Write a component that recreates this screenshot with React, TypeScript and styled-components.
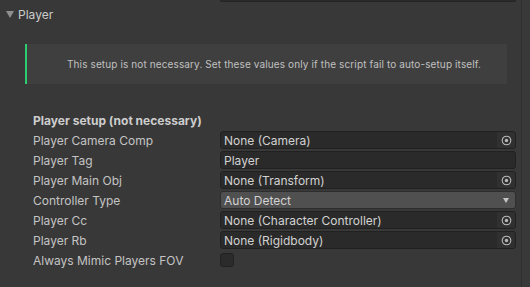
import React from "react";
import styled, { createGlobalStyle } from "styled-components";

const Global = createGlobalStyle`
  html, body { margin: 0; padding: 0; background: #383838; }
  body { font-family: Inter, "Noto Sans", sans-serif; }
`;

const Page = styled.div`
  width: 530px;
  height: 287px;
  display: flex;
  overflow: hidden;
  background: #383838;
`;

const Main = styled.div`
  width: 521px;
  display: flex;
  flex-direction: column;
`;

const Divider = styled.div`
  width: 1px;
  background: #2f2f2f;
`;

const Gutter = styled.div`
  flex: 1;
  background: #393939;
`;

const TopStub = styled.div`
  margin-left: 220px;
  width: 296px;
  height: 2px;
  background: #2a2a2a;
  border-bottom: 1px solid #232323;
  border-radius: 0 0 3px 3px;
  box-sizing: border-box;
`;

const Foldout = styled.div`
  display: flex;
  align-items: center;
  height: 16px;
  margin-top: 4px;
  padding-left: 6px;
  gap: 4px;
  color: #cbcbcb;
  font-size: 12px;
`;

const Triangle = styled.span`
  width: 0;
  height: 0;
  border-left: 4px solid transparent;
  border-right: 4px solid transparent;
  border-top: 7px solid #8f8f8f;
  margin-top: 1px;
`;

const HelpBox = styled.div`
  margin: 22px 14px 0 25px;
  height: 40px;
  background: #3f3f3f;
  border-left: 2px solid #2ecc71;
  display: flex;
  align-items: center;
  padding-left: 40px;
  color: #c0c0c0;
  font-size: 10px;
  letter-spacing: 0.12px;
`;

const Section = styled.div`
  margin-top: 27px;
  padding-left: 33px;
  display: flex;
  flex-direction: column;
  gap: 2px;
`;

const Heading = styled.div`
  height: 18px;
  display: flex;
  align-items: center;
  font-weight: 700;
  font-size: 12px;
  color: #cdcdcd;
`;

const Row = styled.div`
  display: grid;
  grid-template-columns: 187px 296px;
  height: 18px;
  align-items: center;
`;

const Label = styled.div`
  font-size: 12px;
  color: #c4c4c4;
  white-space: nowrap;
`;

const Field = styled.div<{ $dropdown?: boolean }>`
  height: 18px;
  box-sizing: border-box;
  border: 1px solid ${(p) => (p.$dropdown ? "#2e2e2e" : "#212121")};
  border-radius: 3px;
  background: ${(p) => (p.$dropdown ? "#505050" : "#2a2a2a")};
  display: flex;
  align-items: center;
  padding-left: 3px;
  font-size: 12px;
  color: #d2d2d2;
  overflow: hidden;
`;

const FieldText = styled.span`
  flex: 1;
  white-space: nowrap;
`;

const Picker = styled.div`
  width: 18px;
  height: 16px;
  background: #303030;
  display: flex;
  align-items: center;
  justify-content: center;
`;

const Arrow = styled.span`
  width: 0;
  height: 0;
  border-left: 3.5px solid transparent;
  border-right: 3.5px solid transparent;
  border-top: 5px solid #c4c4c4;
  margin-right: 6px;
`;

const Checkbox = styled.div`
  width: 14px;
  height: 14px;
  box-sizing: border-box;
  border: 1px solid #212121;
  border-radius: 3px;
  background: #2b2b2b;
`;

const PickerIcon = () => (
  <svg width="11" height="11" viewBox="0 0 11 11">
    <circle cx="5.5" cy="5.5" r="4.3" fill="none" stroke="#b8b8b8" strokeWidth="1.1" />
    <circle cx="5.5" cy="5.5" r="1.7" fill="#b8b8b8" />
  </svg>
);

const ObjectField = ({ value }: { value: string }) => (
  <Field>
    <FieldText>{value}</FieldText>
    <Picker>
      <PickerIcon />
    </Picker>
  </Field>
);

export default function App() {
  return (
    <>
      <Global />
      <Page>
        <Main>
          <TopStub />
          <Foldout>
            <Triangle />
            <span>Player</span>
          </Foldout>
          <HelpBox>
            This setup is not necessary. Set these values only if the script fail to auto-setup itself.
          </HelpBox>
          <Section>
            <Heading>Player setup (not necessary)</Heading>
            <Row>
              <Label>Player Camera Comp</Label>
              <ObjectField value="None (Camera)" />
            </Row>
            <Row>
              <Label>Player Tag</Label>
              <Field>
                <FieldText>Player</FieldText>
              </Field>
            </Row>
            <Row>
              <Label>Player Main Obj</Label>
              <ObjectField value="None (Transform)" />
            </Row>
            <Row>
              <Label>Controller Type</Label>
              <Field $dropdown>
                <FieldText>Auto Detect</FieldText>
                <Arrow />
              </Field>
            </Row>
            <Row>
              <Label>Player Cc</Label>
              <ObjectField value="None (Character Controller)" />
            </Row>
            <Row>
              <Label>Player Rb</Label>
              <ObjectField value="None (Rigidbody)" />
            </Row>
            <Row>
              <Label>Always Mimic Players FOV</Label>
              <Checkbox />
            </Row>
          </Section>
        </Main>
        <Divider />
        <Gutter />
      </Page>
    </>
  );
}
